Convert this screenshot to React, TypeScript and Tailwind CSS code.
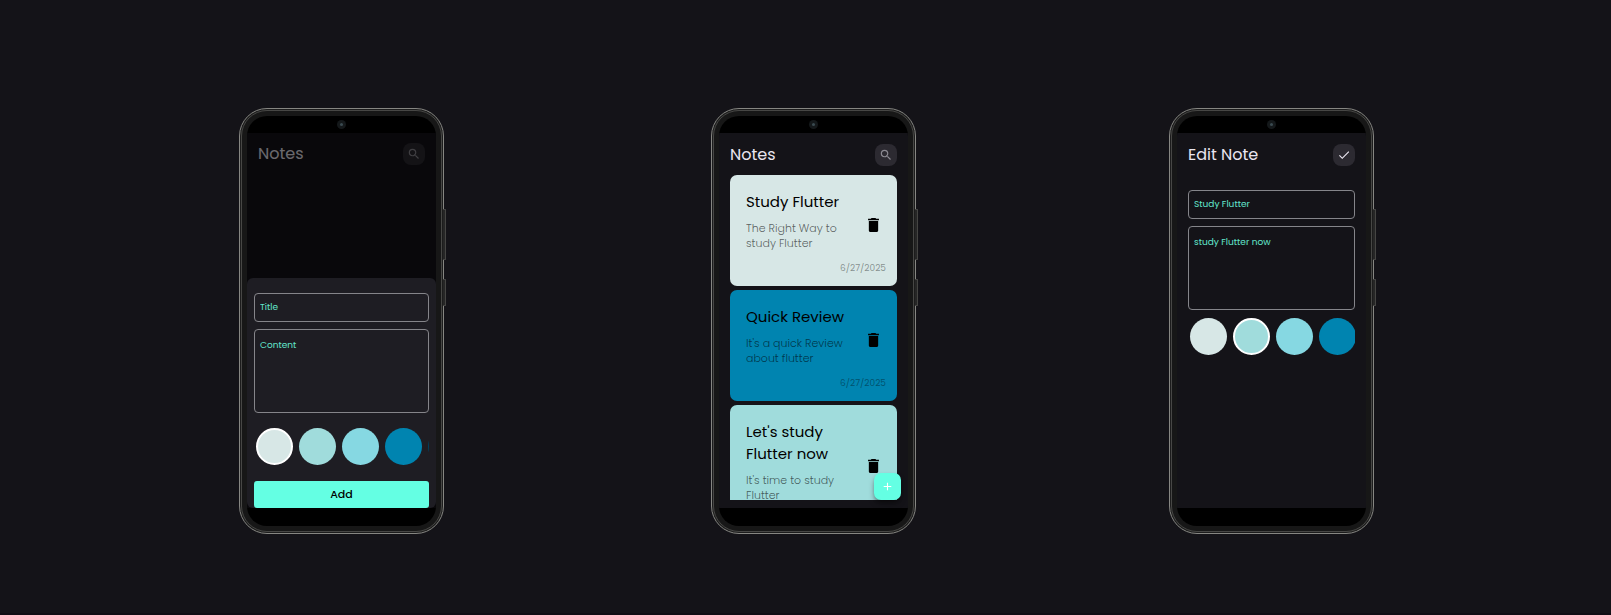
import React, { useState } from "react";
import type { ReactNode } from "react";

const SWATCHES = [
  { name: "Mist", bg: "bg-[#d7e7e6]" },
  { name: "Seafoam", bg: "bg-[#a0dcdc]" },
  { name: "Sky", bg: "bg-[#86d8e2]" },
  { name: "Ocean", bg: "bg-[#0084b0]" },
  { name: "Deep", bg: "bg-[#00405f]" },
];

const NOTES = [
  { title: "Study Flutter", text: "The Right Way to study Flutter", date: "6/27/2025", bg: "bg-[#d7e7e6]" },
  { title: "Quick Review", text: "It's a quick Review about flutter", date: "6/27/2025", bg: "bg-[#0084b0]" },
  { title: "Let's study Flutter now", text: "It's time to study Flutter", date: "", bg: "bg-[#a0dcdc]" },
];

function Phone({ children }: { children: ReactNode }) {
  return (
    <section className="relative w-[205px] rounded-[28px] border border-[#868682] bg-[#1c1c1c] p-px">
      <span className="absolute -right-[3px] top-[100px] h-[51px] w-[3px] rounded-r-[1px] border border-l-0 border-[#454543] bg-[#262626]" />
      <span className="absolute -right-[3px] top-[170px] h-[27px] w-[3px] rounded-r-[1px] border border-l-0 border-[#454543] bg-[#262626]" />
      <div className="rounded-[26px] border border-[#474745] bg-[#171717] p-[5px]">
        <div className="flex flex-col overflow-hidden rounded-[20px] bg-black">
          <div className="flex h-[17px] items-center justify-center">
            <span className="flex size-[9px] items-center justify-center rounded-full bg-[#14181a]">
              <span className="size-[3px] rounded-full bg-[#3a4a50]" />
            </span>
          </div>
          <div className="relative flex h-[375px] flex-col overflow-hidden">{children}</div>
          <div className="h-[18px]" />
        </div>
      </div>
    </section>
  );
}

function SearchIcon() {
  return (
    <svg viewBox="0 0 24 24" className="size-[14px]" fill="currentColor" aria-hidden="true">
      <path d="M15.5 14h-.79l-.28-.27A6.47 6.47 0 0 0 16 9.5 6.5 6.5 0 1 0 9.5 16c1.61 0 3.09-.59 4.23-1.57l.27.28v.79l5 4.99L20.49 19l-4.99-5zm-6 0C7.01 14 5 11.99 5 9.5S7.01 5 9.5 5 14 7.01 14 9.5 11.99 14 9.5 14z" />
    </svg>
  );
}

function CheckIcon() {
  return (
    <svg viewBox="0 0 24 24" className="size-[14px]" fill="currentColor" aria-hidden="true">
      <path d="M9 16.17 4.83 12l-1.42 1.41L9 19 21 7l-1.41-1.41z" />
    </svg>
  );
}

function TrashIcon() {
  return (
    <svg viewBox="5 3 14 18" className="h-[14px] w-[11px]" fill="currentColor" aria-hidden="true">
      <path d="M6 19c0 1.100.9 2 2 2h8c1.100 0 2-.9 2-2V7H6v12zM19 4h-3.500l-1-1h-5l-1 1H5v2h14V4z" />
    </svg>
  );
}

function AppBar({ title, label, icon, tone }: { title: string; label: string; icon: ReactNode; tone: string }) {
  return (
    <header className="flex items-center justify-between">
      <h1 className="text-base leading-[22px] font-normal text-[#e9e5ef]">{title}</h1>
      <button type="button" aria-label={label} className={`flex size-[22px] items-center justify-center rounded-[8px] bg-[#2c2a31] ${tone}`}>
        {icon}
      </button>
    </header>
  );
}

function Fields({ title = "", content = "" }: { title?: string; content?: string }) {
  const box =
    "block w-full rounded-[4px] border border-[#85858a] bg-transparent px-[5px] text-[9px] text-[#62e6cc] placeholder:text-[#62e6cc] outline-none";
  return (
    <div className="flex flex-col gap-[7px]">
      <input aria-label="Title" placeholder="Title" defaultValue={title} className={`${box} h-[29px]`} />
      <textarea aria-label="Content" placeholder="Content" defaultValue={content} className={`${box} h-[84px] resize-none pt-2 leading-[14px]`} />
    </div>
  );
}

function Swatches({ initial }: { initial: number }) {
  const [selected, setSelected] = useState(initial);
  return (
    <div className="flex gap-[6px] overflow-hidden pl-[2px]">
      {SWATCHES.map((s, i) => (
        <button
          key={s.name}
          type="button"
          aria-label={s.name}
          aria-pressed={i === selected}
          onClick={() => setSelected(i)}
          className={`size-[37px] shrink-0 rounded-full ${s.bg} ${i === selected ? "border-2 border-white" : ""}`}
        />
      ))}
    </div>
  );
}

function AddNote() {
  return (
    <Phone>
      <div className="flex-1 bg-[#141318] px-[11px] pt-[10px]">
        <AppBar title="Notes" label="Search notes" icon={<SearchIcon />} tone="text-[#8b8991]" />
      </div>
      <div className="absolute inset-0 bg-black/54" />
      <form className="absolute inset-x-0 bottom-0 flex flex-col rounded-[6px] bg-[#1e1d23] px-[7px] pt-[15px]" onSubmit={(e) => e.preventDefault()}>
        <Fields />
        <div className="pt-[15px] pb-4">
          <Swatches initial={0} />
        </div>
        <button type="submit" className="h-[27px] rounded-[3px] bg-[#64ffe3] text-[11px] font-medium text-black">
          Add
        </button>
      </form>
    </Phone>
  );
}

function NotesList() {
  return (
    <Phone>
      <div className="flex h-full flex-col bg-[#141318] px-[11px] pt-[11px] pb-2">
        <AppBar title="Notes" label="Search notes" icon={<SearchIcon />} tone="text-[#8b8991]" />
        <ul className="mt-[9px] flex min-h-0 flex-1 flex-col gap-1 overflow-hidden">
          {NOTES.map((n) => (
            <li key={n.title} className={`flex shrink-0 flex-col rounded-[7px] pt-4 pr-[11px] pb-[10px] pl-4 ${n.bg}`}>
              <div className="flex items-center justify-between pr-[7px]">
                <div className="w-[104px] pb-2">
                  <h2 className="text-[15px] leading-[22px] text-black">{n.title}</h2>
                  <p className="mt-2 text-[11px] leading-[15px] font-light text-black/60">{n.text}</p>
                </div>
                <button type="button" aria-label={`Delete ${n.title}`} className="text-black">
                  <TrashIcon />
                </button>
              </div>
              <time className="mt-[2px] h-[15px] text-right text-[9px] leading-[15px] text-black/40">{n.date}</time>
            </li>
          ))}
        </ul>
      </div>
      <button type="button" aria-label="Add note" className="absolute right-[7px] bottom-2 flex size-[27px] items-center justify-center rounded-[7px] bg-[#64ffe3] text-white shadow-md shadow-black/40">
        <svg viewBox="0 0 24 24" className="size-[13px]" fill="currentColor" aria-hidden="true">
          <path d="M19 13h-6v6h-2v-6H5v-2h6V5h2v6h6v2z" />
        </svg>
      </button>
    </Phone>
  );
}

function EditNote() {
  return (
    <Phone>
      <div className="flex h-full flex-col bg-[#141318] px-[11px] pt-[11px]">
        <AppBar title="Edit Note" label="Save note" icon={<CheckIcon />} tone="text-[#e9e5ef]" />
        <div className="mt-6">
          <Fields title="Study Flutter" content="study Flutter now" />
        </div>
        <div className="mt-2">
          <Swatches initial={1} />
        </div>
      </div>
    </Phone>
  );
}

export default function App() {
  return (
    <main className="grid min-h-screen grid-cols-[239fr_205px_267fr_205px_253fr_205px_237fr] content-start border-b-2 border-[#100d14] bg-[#141318] pt-[108px] font-['Poppins','Inter',sans-serif]">
      <div className="col-start-2"><AddNote /></div>
      <div className="col-start-4"><NotesList /></div>
      <div className="col-start-6"><EditNote /></div>
    </main>
  );
}
